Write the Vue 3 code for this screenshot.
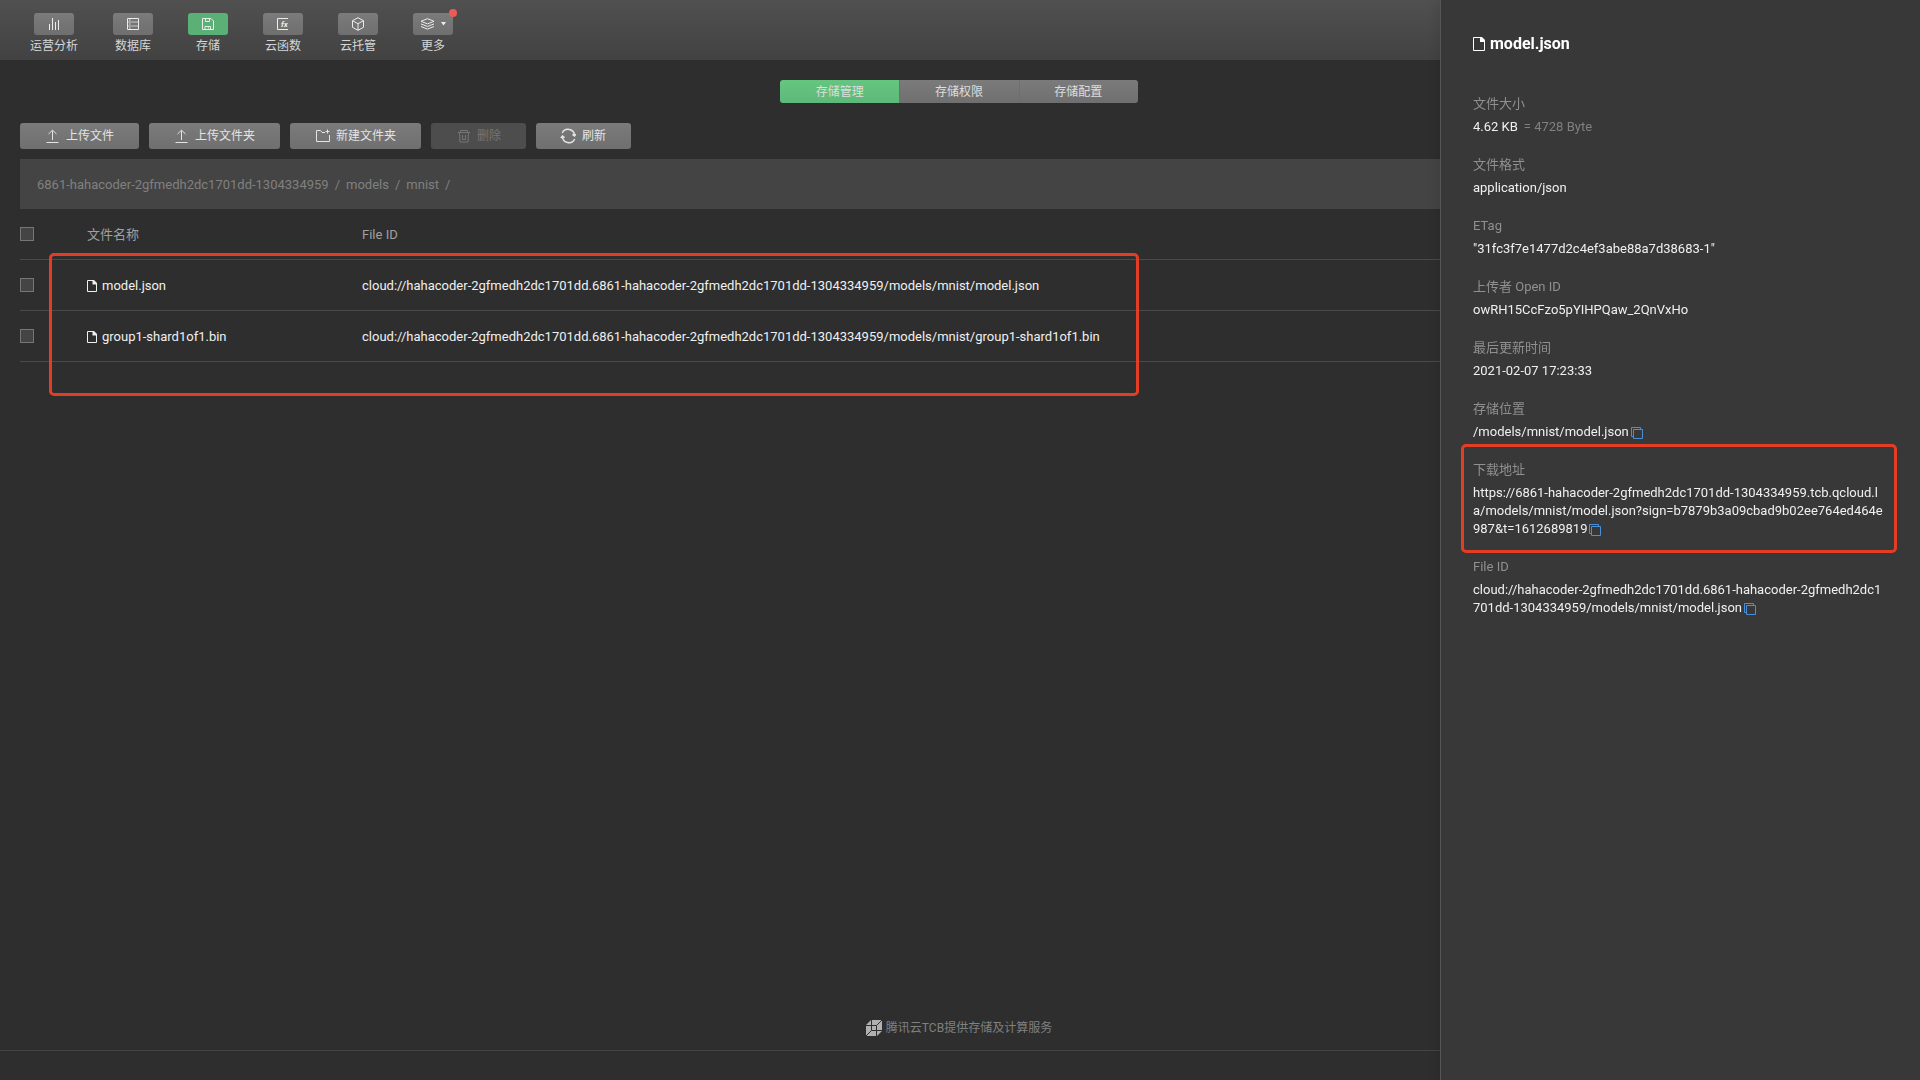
<script setup>
import { ref } from 'vue'

const navItems = [
  { id: 'analytics', label: '运营分析' },
  { id: 'database', label: '数据库' },
  { id: 'storage', label: '存储', active: true },
  { id: 'function', label: '云函数' },
  { id: 'hosting', label: '云托管' },
  { id: 'more', label: '更多', dot: true },
]

const tabs = ['存储管理', '存储权限', '存储配置']
const activeTab = ref(0)

const actions = [
  { id: 'upload', label: '上传文件' },
  { id: 'upload', label: '上传文件夹' },
  { id: 'folder', label: '新建文件夹' },
  { id: 'trash', label: '删除', disabled: true },
  { id: 'refresh', label: '刷新' },
]

const crumbs = ['6861-hahacoder-2gfmedh2dc1701dd-1304334959', 'models', 'mnist']

const base = 'cloud://hahacoder-2gfmedh2dc1701dd.6861-hahacoder-2gfmedh2dc1701dd-1304334959/models/mnist/'
const files = ['model.json', 'group1-shard1of1.bin'].map((name) => ({ name, fileId: base + name }))

const details = [
  { label: '文件大小', value: '4.62 KB', note: '= 4728 Byte' },
  { label: '文件格式', value: 'application/json' },
  { label: 'ETag', value: '"31fc3f7e1477d2c4ef3abe88a7d38683-1"' },
  { label: '上传者 Open ID', value: 'owRH15CcFzo5pYIHPQaw_2QnVxHo' },
  { label: '最后更新时间', value: '2021-02-07 17:23:33' },
  { label: '存储位置', value: '/models/mnist/model.json', copy: true },
  {
    label: '下载地址',
    value:
      'https://6861-hahacoder-2gfmedh2dc1701dd-1304334959.tcb.qcloud.la/models/mnist/model.json?sign=b7879b3a09cbad9b02ee764ed464e987&t=1612689819',
    copy: true,
    marked: true,
  },
  { label: 'File ID', value: base + 'model.json', copy: true },
]
</script>

<template>
  <div class="page">
    <header class="topbar">
      <nav class="nav">
        <button v-for="item in navItems" :key="item.id" type="button" class="nav-item" :class="{ active: item.active }">
          <span class="nav-icon">
            <svg v-if="item.id === 'analytics'" width="12" height="14" viewBox="0 0 12 14">
              <path d="M1.5 7v6M4.5 1v12M7.5 5v8M10.500 3v10" />
            </svg>
            <svg v-else-if="item.id === 'database'" width="12" height="12" viewBox="0 0 12 12">
              <path d="M.5.5h11v11H.5z" />
              <path d="M.5 4h11M.5 8h11" opacity=".7" />
              <path d="M2 2h1.500M2 6h1.500M2 10h1.500" />
            </svg>
            <svg v-else-if="item.id === 'storage'" width="12" height="12" viewBox="0 0 12 12">
              <path d="M.5.5h8.500l2.500 2.500v8.500H.5zM3.500.5v3h4v-3M3 11.500v-3h5.500v3M6.500 9.500v1" />
            </svg>
            <svg v-else-if="item.id === 'function'" width="12" height="12" viewBox="0 0 12 12">
              <path d="M11 .5H.5v11H11" />
              <text x="4" y="9">fx</text>
            </svg>
            <svg v-else-if="item.id === 'hosting'" width="14" height="14" viewBox="0 0 14 14">
              <path d="M7 .7l5.500 3v6.600L7 13.300l-5.500-3V3.700zM1.500 3.700L7 6.700l5.500-3M7 6.700v6.600" />
            </svg>
            <template v-else>
              <svg width="15" height="12" viewBox="0 0 15 12">
                <path d="M7.500.7l6.500 2.600-6.500 2.600L1 3.300zM1 5.900l6.500 2.600L14 5.900M1 8.500l6.500 2.600L14 8.500" />
              </svg>
              <svg class="caret" width="5" height="4" viewBox="0 0 5 4"><path d="M0 0h5L2.500 3.500z" /></svg>
            </template>
            <i v-if="item.dot" class="dot"></i>
          </span>
          <span class="nav-label">{{ item.label }}</span>
        </button>
      </nav>
    </header>

    <main class="content">
      <div class="tabs" role="tablist">
        <button
          v-for="(tab, i) in tabs"
          :key="tab"
          type="button"
          role="tab"
          class="tab"
          :class="{ active: activeTab === i }"
          :aria-selected="activeTab === i"
          @click="activeTab = i"
        >{{ tab }}</button>
      </div>

      <div class="actions">
        <button v-for="a in actions" :key="a.label" type="button" class="action" :disabled="a.disabled">
          <svg v-if="a.id === 'upload'" width="16" height="16" viewBox="0 0 16 16">
            <path d="M8.500 2.500V12M4.500 6l4-3.800 4 3.800" />
            <path d="M2.500 14.500h12" />
          </svg>
          <svg v-else-if="a.id === 'folder'" width="16" height="16" viewBox="0 0 16 16">
            <path d="M11 4.500H8L6.500 2.500h-4v11h13V7M13.500 1.500v4M11.500 3.500h4" />
          </svg>
          <svg v-else-if="a.id === 'trash'" width="16" height="16" viewBox="0 0 16 16">
            <path d="M3 4.500h12M5.500 4.500v-2h7v2M4.500 4.500l.5 9.500h8l.5-9.500M7.500 7v4.500h3V7" />
          </svg>
          <svg v-else class="thick" width="16" height="16" viewBox="0 0 16 16">
            <path d="M2.300 5A6.400 6.400 0 0 1 14.500 7.500M14.700 11A6.400 6.400 0 0 1 2.500 8.500M.8 10l1.700-2 2 1.600M12.500 6.400l2 1.600 1.300-1.800" />
          </svg>
          <span>{{ a.label }}</span>
        </button>
      </div>

      <div class="crumbs">
        <template v-for="c in crumbs" :key="c">
          <a href="#">{{ c }}</a><span class="slash">/</span>
        </template>
      </div>

      <div class="table-wrap">
        <table>
          <thead>
            <tr>
              <th class="col-check"><input type="checkbox" aria-label="全选" /></th>
              <th class="col-name">文件名称</th>
              <th>File ID</th>
            </tr>
          </thead>
          <tbody>
            <tr v-for="f in files" :key="f.name">
              <td class="col-check"><input type="checkbox" :aria-label="f.name" /></td>
              <td class="col-name">
                <span class="file">
                  <svg width="10" height="12" viewBox="0 0 10 12">
                    <path d="M.5.5H6L9.500 4v7.500H.5z" />
                    <path class="fold" d="M5.500 0H7l3 3v1.500H5.500z" />
                  </svg>
                  {{ f.name }}
                </span>
              </td>
              <td>{{ f.fileId }}</td>
            </tr>
          </tbody>
        </table>
        <div class="mark mark-table"></div>
      </div>
    </main>

    <footer class="footer">
      <div class="provider">
        <svg width="16" height="16" viewBox="0 0 16 16">
          <path class="body" d="M5 0h11v11l-5 5H0V5z" />
          <path class="seam" d="M0 5.500h10.500V16M10.500 5.500L16 0M5.500 0v10.500H16M5.500 10.500L0 16" />
        </svg>
        <span>腾讯云TCB提供存储及计算服务</span>
      </div>
    </footer>

    <aside class="drawer">
      <h2>
        <svg width="12" height="14" viewBox="0 0 12 14">
          <path d="M.5.5H8L11.500 4v9.500H.5z" />
          <path class="fold" d="M7 0h2l3 3v2H7z" />
        </svg>
        model.json
      </h2>
      <dl>
        <div v-for="d in details" :key="d.label" class="detail">
          <dt>{{ d.label }}</dt>
          <dd>
            {{ d.value }}<span v-if="d.note" class="note">{{ d.note }}</span><button v-if="d.copy" type="button" class="copy" :aria-label="'复制' + d.label">
              <svg width="12" height="12" viewBox="0 0 12 12"><path d="M2.500 2.500h9v9h-9zM2.500 9.500h-2v-9h9v2" /></svg>
            </button>
          </dd>
          <div v-if="d.marked" class="mark mark-detail"></div>
        </div>
      </dl>
    </aside>
  </div>
</template>

<style>
body {
  background: #2e2e2e;
}
</style>

<style scoped>
.page {
  min-height: 100vh;
  display: flex;
  flex-direction: column;
  background: #2e2e2e;
  color: #f0f0f0;
  font-family: Roboto, "Noto Sans CJK SC", sans-serif;
  font-size: 13px;
  line-height: 18px;
}

button {
  border: 0;
  padding: 0;
  margin: 0;
  background: none;
  color: inherit;
  font: inherit;
}

svg {
  display: block;
  flex: none;
  fill: none;
  stroke: currentColor;
  stroke-width: 1;
}

.topbar {
  height: 60px;
  background: linear-gradient(#505050, #424242);
}

.nav {
  display: flex;
  gap: 35px;
  padding: 13px 30px 0;
}

.nav-item {
  display: flex;
  flex-direction: column;
  align-items: center;
  gap: 2px;
  font-size: 12px;
  color: #d6d6d6;
}

.nav-icon {
  position: relative;
  display: flex;
  align-items: center;
  justify-content: center;
  gap: 6px;
  width: 40px;
  height: 22px;
  border-radius: 3px;
  background: linear-gradient(#7b7b7b, #6f6f6f);
  color: #ececec;
}

.active .nav-icon {
  background: #5bb175;
}

.nav-icon text {
  fill: currentColor;
  stroke: none;
  font: italic bold 8px Roboto, sans-serif;
}

.caret {
  fill: currentColor;
  stroke: none;
}

.thick {
  stroke-width: 1.5;
}

.dot {
  position: absolute;
  top: -4px;
  right: -4px;
  width: 8px;
  height: 8px;
  border-radius: 50%;
  background: #ec5b56;
}

.content {
  flex: 1;
  padding: 20px 22px 0 20px;
}

.tabs {
  display: flex;
  width: 358px;
  height: 23px;
  margin: 0 auto 20px;
  border-radius: 3px;
  overflow: hidden;
}

.tab {
  flex: 1;
  background: linear-gradient(#7b7b7b, #6f6f6f);
  color: #dedede;
  font-size: 12px;
}

.tab + .tab {
  box-shadow: inset 1px 0 #6f6f6f;
}

.tab.active {
  background: linear-gradient(#66c581, #5db978);
}

.actions {
  display: flex;
  gap: 10px;
  margin-bottom: 10px;
}

.action {
  display: flex;
  align-items: center;
  gap: 6px;
  height: 26px;
  padding: 0 25px 0 24px;
  border-radius: 3px;
  background: linear-gradient(#7b7b7b, #6f6f6f);
  color: #e4e4e4;
  font-size: 12px;
}

.action:disabled {
  background: #4d4d4d;
  color: #757575;
}

.crumbs {
  display: flex;
  align-items: center;
  height: 48px;
  padding: 2px 17px 0;
  background: #444;
  color: #808080;
}

.crumbs a {
  color: inherit;
  text-decoration: none;
}

.slash {
  margin: 0 6px;
}

.table-wrap {
  position: relative;
}

table {
  width: 100%;
  border-collapse: collapse;
  table-layout: fixed;
}

th,
td {
  height: 48px;
  padding: 2px 0 0;
  border-bottom: 1px solid #4a4a4a;
  text-align: left;
  font-weight: 400;
}

th {
  color: #a0a0a0;
}

.col-check {
  width: 67px;
}

.col-name {
  width: 275px;
}

input[type="checkbox"] {
  appearance: none;
  display: block;
  width: 14px;
  height: 14px;
  margin: 0 0 3px;
  border: 1px solid #767676;
  background: #444;
}

.file {
  display: flex;
  align-items: center;
  gap: 5px;
}

.fold {
  fill: currentColor;
  stroke: none;
}

.mark {
  position: absolute;
  border: 3px solid #e43d25;
  border-radius: 5px;
  pointer-events: none;
}

.mark-table {
  left: 29px;
  top: 44px;
  width: 1084px;
  height: 137px;
}

.footer {
  padding-bottom: 29px;
}

.provider {
  display: flex;
  align-items: center;
  justify-content: center;
  gap: 4px;
  padding: 0 2px 13px 0;
  border-bottom: 1px solid #444;
  color: #808080;
  font-size: 12px;
}

.provider .body {
  fill: #b0b0b0;
  stroke: none;
}

.provider .seam {
  stroke: #2e2e2e;
}

.drawer {
  position: fixed;
  top: 0;
  right: 0;
  bottom: 0;
  width: 480px;
  box-sizing: border-box;
  padding: 32px 35px 32px 32px;
  border-left: 1px solid #555;
  background: #383838;
  box-shadow: 0 0 12px rgba(0, 0, 0, 0.15);
}

h2 {
  display: flex;
  align-items: center;
  gap: 5px;
  margin: 0 0 40px;
  color: #fff;
  font-size: 16px;
  font-weight: 700;
  line-height: 23px;
}

dl,
dd {
  margin: 0;
}

.detail {
  position: relative;
  margin-bottom: 20px;
}

dt {
  margin-bottom: 5px;
  color: #909090;
}

dd {
  word-break: break-all;
}

.note {
  margin-left: 6px;
  color: #808080;
}

.copy {
  display: inline-block;
  margin-left: 2px;
  color: #4a90d9;
  vertical-align: -3px;
}

.mark-detail {
  top: -17px;
  right: -12px;
  bottom: -15px;
  left: -12px;
}
</style>
